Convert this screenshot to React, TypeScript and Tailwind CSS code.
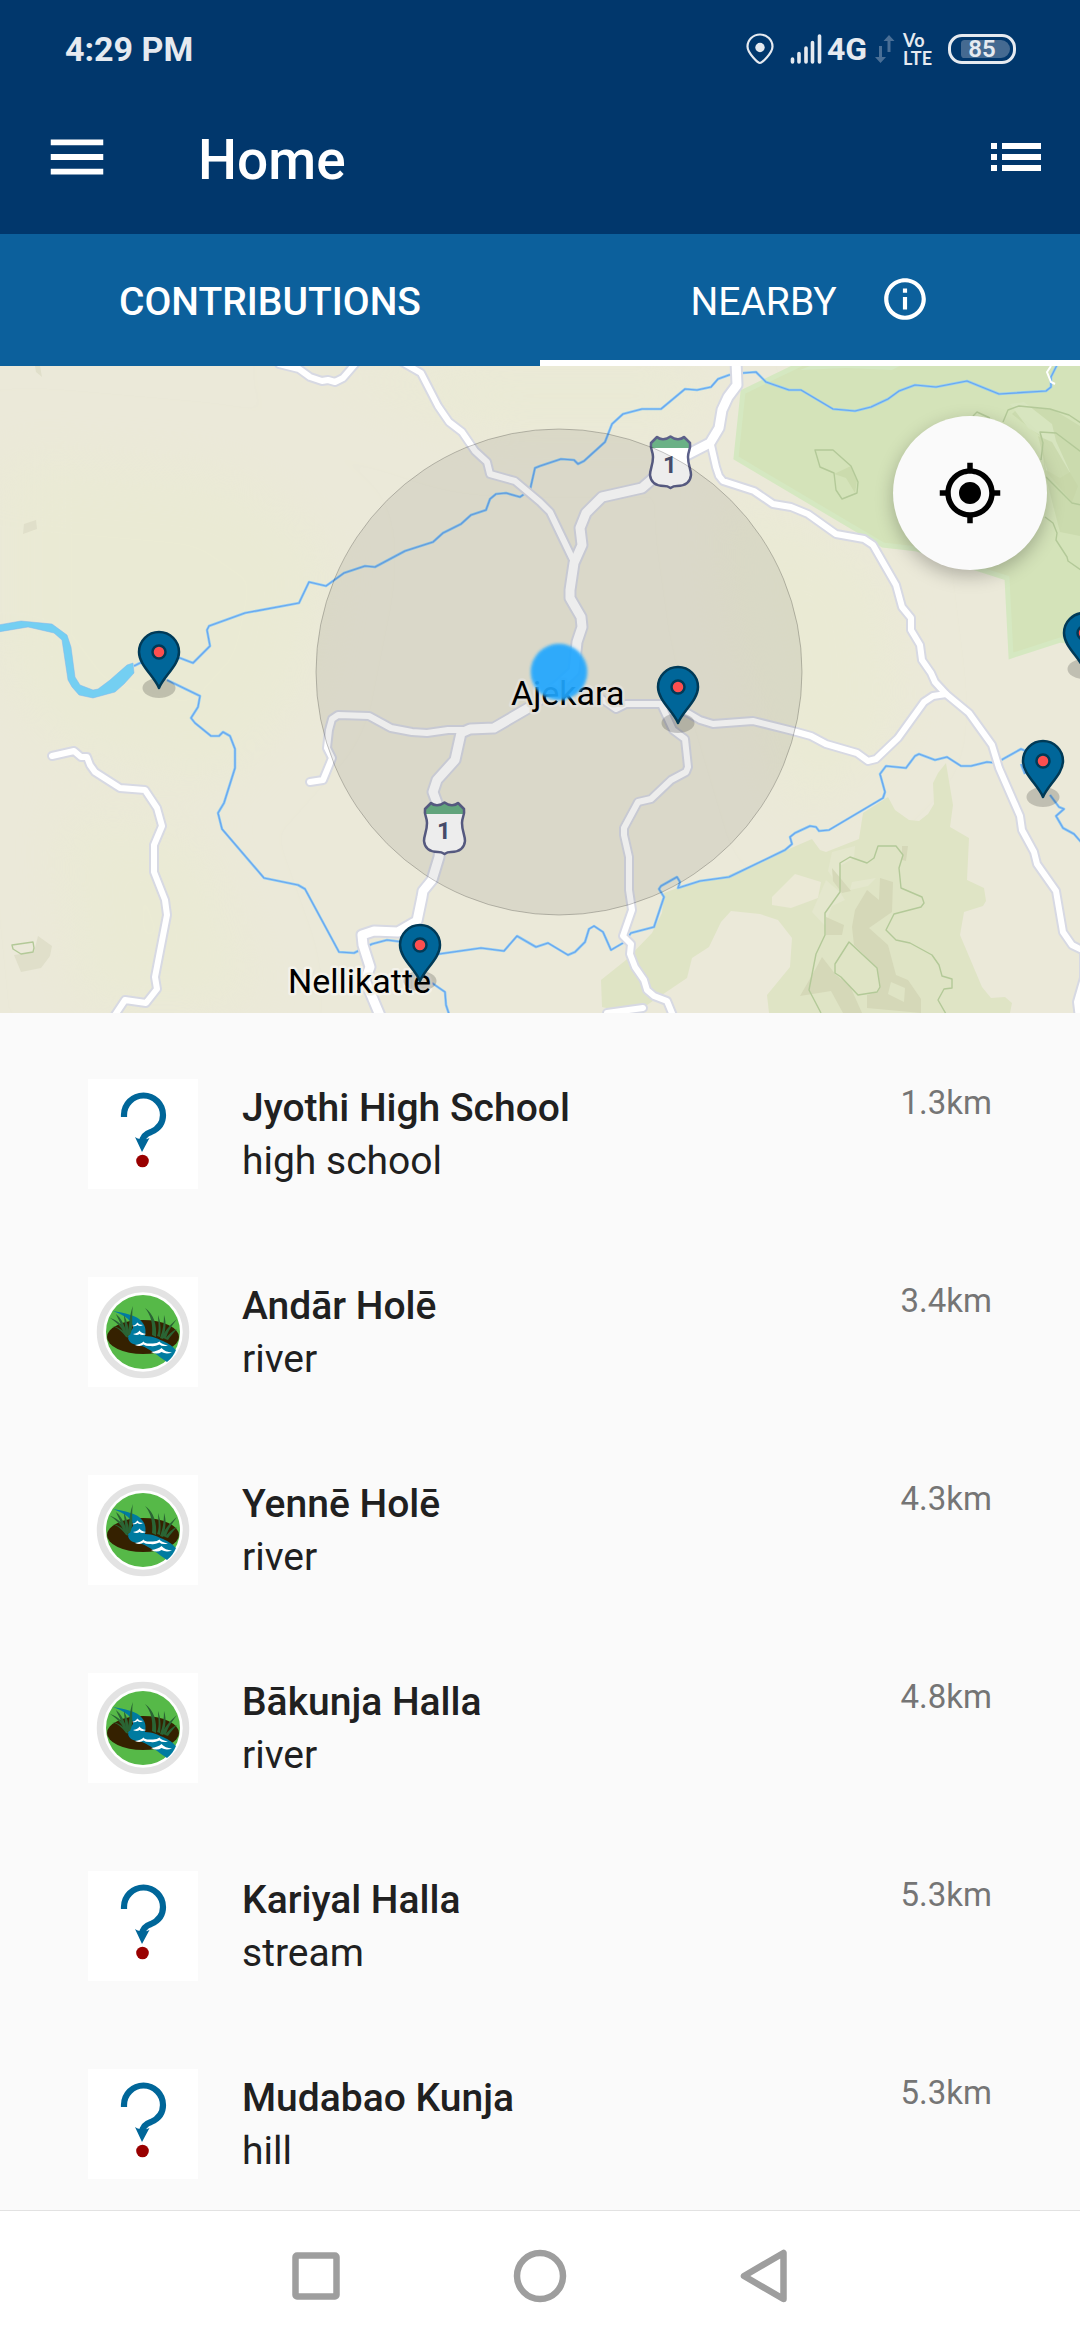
import React from "react";
import { MdInfoOutline, MdMenu, MdMyLocation } from "react-icons/md";

type Kind = "unknown" | "river";

interface Place {
  name: string;
  type: string;
  distance: string;
  kind: Kind;
}

const places: Place[] = [
  { name: "Jyothi High School", type: "high school", distance: "1.3km", kind: "unknown" },
  { name: "Andār Holē", type: "river", distance: "3.4km", kind: "river" },
  { name: "Yennē Holē", type: "river", distance: "4.3km", kind: "river" },
  { name: "Bākunja Halla", type: "river", distance: "4.8km", kind: "river" },
  { name: "Kariyal Halla", type: "stream", distance: "5.3km", kind: "unknown" },
  { name: "Mudabao Kunja", type: "hill", distance: "5.3km", kind: "unknown" },
];

const minorRoads = [
  "M279 -2 L299 3 L310 11 L322 15 L328 14 L335 16 L343 12 L356 -3",
  "M402 -4 L421 7 L438 40 L449 56 L462 66 L475 85 L487 96 L490 108 L515 115 L540 136 L550 146 L574 196",
  "M596 329 L616 343 L626 338 L661 338 L688 347 L700 354 L713 358 L753 355 L793 365 L811 370 L826 378 L857 387 L868 395 L876 393 L898 372 L924 336 L933 330 L946 328",
  "M661 338 L673 364 L685 373 L688 401 L686 406 L671 414 L651 433 L638 436 L624 462 L624 469 L629 491 L629 524 L632 544 L623 570 L631 578 L630 588 L635 601 L644 614 L647 624 L654 630 L667 635 L674 652",
  "M607 647 L643 642",
  "M711 79 L716 101 L719 110 L723 115 L754 125 L773 138 L791 141 L808 148 L836 168 L864 173 L873 179 L896 219 L902 241 L911 252 L911 264 L920 279 L922 294 L931 307 L935 316 L946 328 L969 347 L992 379 L999 402 L1020 450 L1022 464 L1034 486 L1037 498 L1056 525 L1063 566 L1072 579 L1084 585 L1084 612 L1077 636 L1079 652",
  "M52 390 L74 385 L81 391 L87 391 L90 399 L95 406 L120 422 L145 424 L157 442 L162 460 L154 479 L154 506 L165 534 L167 549 L155 611 L157 623 L146 637 L125 634 L113 652",
  "M310 416 L323 414 L332 392 L327 382 L329 364 L332 353 L338 349 L369 350 L391 362 L412 366 L427 367 L448 364 L470 364",
];

const highways = [
  "M736 -5 L737 19 L728 31 L722 44 L719 62 L710 77 L671 97 L642 122 L602 131 L586 147 L580 162 L582 179 L574 197 L570 224 L570 232 L581 251 L582 261 L577 276 L574 305 L560 318 L530 341 L494 362 L470 363 L461 367 L455 394 L437 414 L433 426 L437 437 L442 464 L439 491 L432 514 L423 525 L422 531 L417 555 L398 566 L374 565 L362 569 L363 579 L370 601 L365 614 L381 652",
];

const streams = [
  "M134 300 L140 297 L180 292 L193 297 L210 280 L207 264 L209 260 L245 247 L299 237 L309 216 L326 220 L344 207 L365 200 L375 201 L405 185 L433 176 L443 167 L461 158 L471 149 L486 144 L490 133 L496 128 L506 127 L520 131 L530 124 L535 102 L540 100 L561 93 L574 94 L578 98 L584 95 L605 76 L612 58 L623 48 L642 43 L661 43 L685 23 L697 24 L711 21 L718 13 L729 9 L743 7 L756 6 L766 16 L789 24 L801 24 L833 43 L855 45 L871 41 L888 33 L899 25 L915 19 L936 21 L967 15 L999 28 L1046 25 L1051 21 L1051 11 L1057 -1",
  "M167 314 L200 330 L198 341 L191 352 L195 357 L211 370 L219 370 L223 366 L230 370 L235 383 L235 402 L224 437 L218 447 L222 463 L264 512 L298 519 L305 523 L339 586 L354 587 L372 578 L387 574 L403 576 L420 590 L439 588 L481 582 L504 585 L517 570 L536 581 L548 577 L568 589 L575 586 L585 576 L589 563 L594 560 L603 566 L611 584 L623 577 L631 567 L654 561 L664 531 L659 523 L661 520 L677 511 L680 516 L678 522 L700 515 L729 511 L785 484 L792 478 L790 471 L795 467 L810 460 L816 461 L819 465 L829 464 L883 432 L885 426 L880 408 L886 400 L906 402 L915 390 L919 388 L935 394 L947 391 L961 400 L971 400 L987 396 L996 397 L1021 383 L1028 386",
  "M1021 398 L1025 408",
  "M1050 429 L1059 441 L1064 443 L1056 450 L1063 462 L1074 468 L1081 476",
  "M432 617 L445 626 L446 639 L449 648",
];

const contours = [
  "M815 84 L833 84 L851 100 L858 116 L857 127 L842 133 L836 124 L834 107 L820 101 Z",
  "M973 50 L977 46 L990 52 M1003 56 L1008 44 L1019 40 L1050 43 L1069 49 L1081 57",
  "M1081 86 L1056 67 L1040 66 L1043 77 L1041 94",
  "M1046 111 L1072 137 L1081 139",
  "M1045 151 L1053 157 L1057 167 L1056 174 L1067 191 L1068 195 L1081 204",
  "M821 647 L809 624 L816 588 L825 569 L825 547 L840 526 L840 497 L850 491 L867 497 L874 492 L878 480 L896 480 L903 489 L899 502 L901 522 L922 531 L924 537 L921 541 L894 548 L886 564 L896 574 L910 577 L932 589 L939 599 L942 610 L952 613 L952 622 L944 623 L938 634 L946 648",
  "M849 576 L877 602 L880 621 L877 626 L858 629 L841 611 L835 607 L835 598 Z",
  "M12 579 L33 576 L34 582 L33 586 L21 588 L13 583 Z",
];

const pins = [
  { x: 159, y: 323 },
  { x: 678, y: 358 },
  { x: 1043, y: 432 },
  { x: 420, y: 616 },
  { x: 1084, y: 304 },
];

function RoadShield({ x, y }: { x: number; y: number }) {
  const outline =
    "M8 2 C11 5 17 5 21.500 1.500 C26 5 32 5 35 2 L41 8 C42 14 39 16 39 22 C39 30 42 34 42 40 C41 50 33 51 28 51 C24 51 23 52 21.500 53 C20 52 19 51 15 51 C10 51 2 50 1 40 C1 34 4 30 4 22 C4 16 1 14 2 8 Z";
  return (
    <g transform={`translate(${x} ${y})`}>
      <path d={outline} fill="#fff" />
      <path d="M8 2 C11 5 17 5 21.500 1.500 C26 5 32 5 35 2 L41 8 L40 13 L3 13 L2 8 Z" fill="#6ab186" />
      <path d={outline} fill="none" stroke="#5c6089" strokeWidth="2.500" strokeLinejoin="round" />
      <text x="21" y="38" textAnchor="middle" fontSize="24" fontWeight="700" fill="#4c5172">
        1
      </text>
    </g>
  );
}

function Pin({ x, y }: { x: number; y: number }) {
  return (
    <g transform={`translate(${x} ${y})`}>
      <ellipse cx="0" cy="-1" rx="16.500" ry="10" fill="#000" opacity="0.18" />
      <path
        d="M0 -1 C-5 -13 -20 -24 -20 -37 A20 20 0 0 1 20 -37 C20 -24 5 -13 0 -1 Z"
        fill="#069"
        stroke="#003a57"
        strokeWidth="2.500"
        strokeLinejoin="round"
      />
      <circle cx="0" cy="-37" r="6.500" fill="#fe4f4f" stroke="#003a57" strokeWidth="2.500" />
    </g>
  );
}

function MapDrawing() {
  return (
    <svg
      className="block h-[647px] w-full"
      viewBox="0 0 1080 647"
      preserveAspectRatio="xMidYMid slice"
      role="img"
      aria-label="Map around Ajekara"
    >
      <defs>
        <filter id="soft" x="-20%" y="-20%" width="140%" height="140%">
          <feGaussianBlur stdDeviation="1.500" />
        </filter>
        <filter id="haze" x="-20%" y="-20%" width="140%" height="140%">
          <feGaussianBlur stdDeviation="30" />
        </filter>
      </defs>
      <rect width="1080" height="647" fill="#ebe9d9" />
      <g filter="url(#haze)" fill="#eaead4">
        <path d="M0 90 L230 110 L330 180 L300 330 L220 420 L60 380 L0 300 Z" />
        <path d="M300 0 L700 0 L720 60 L480 60 Z" />
        <path d="M720 120 L880 200 L900 360 L800 460 L740 260 Z" />
        <path d="M60 440 L200 470 L260 640 L80 640 Z" />
      </g>

      <path
        d="M805 -4 L743 26 L736 92 L883 179 L917 183 L1007 212 L1011 290 L1060 274 L1090 279 L1090 -4 Z"
        fill="#d4e3b9"
        stroke="#d5e8c1"
        strokeWidth="5"
      />
      <path d="M800 4 L810 0 L900 0 L892 4 L846 2 Z" fill="#d5e8c4" />
      <path d="M1012 48 L1020 40 L1054 44 L1080 60 L1080 170 L1060 166 L1046 112 L1040 70 Z" fill="#cbdbae" />
      <path d="M1010 38 L1024 36 L1052 58 L1056 75 L1070 106 L1060 112 L1046 104 L1042 70 L1028 62 Z" fill="#d7e5bf" />
      <path d="M1038 70 L1052 76 L1066 100 L1078 120 L1072 136 L1048 108 Z" fill="#c6d6a6" opacity="0.7" />
      <path d="M834 108 L851 100 L857 115 L855 127 L846 112 Z" fill="#cbdbad" />

      <path
        d="M601 614 L626 594 L652 567 L662 547 L664 527 L680 521 L729 509 L812 473 L820 484 L826 486 L859 473 L863 447 L888 431 L895 444 L909 454 L919 455 L928 448 L934 438 L933 417 L938 407 L946 397 L953 439 L950 461 L969 472 L967 514 L984 522 L986 535 L983 540 L964 546 L960 569 L982 621 L991 632 L1005 631 L1012 637 L1010 647 L769 647 L767 629 L790 601 L792 572 L778 554 L760 548 L731 545 L721 556 L709 581 L692 592 L687 612 L647 639 L620 645 L602 641 Z"
        fill="#dfe4c5"
      />
      <path d="M772 531 L795 508 L821 516 L818 532 L791 542 L772 539 Z" fill="#ebe9d6" />
      <g fill="#e4e7cd">
        <path d="M832 486 L855 480 L854 492 L840 500 L838 520 L828 505 Z" />
        <path d="M812 546 L826 514 L840 526 L845 534 L832 540 L825 560 Z" />
        <path d="M852 516 L876 512 L868 520 L850 524 Z" />
      </g>
      <g fill="#d5d8b8">
        <path d="M867 524 L879 534 L880 512 L893 516 L892 546 L869 562 L888 579 L896 609 L908 614 L921 633 L921 647 L867 642 L867 629 L877 626 L880 621 L877 602 L854 579 L852 561 L855 544 Z" />
        <path d="M822 591 L836 609 L850 620 L862 647 L843 647 L831 625 L800 630 L815 604 Z" />
        <path d="M826 551 L844 559 L842 569 L826 569 Z" />
        <path d="M832 502 L851 525 L842 527 L833 515 Z" />
        <path d="M902 480 L908 480 L906 495 L902 494 Z" />
      </g>
      <path d="M891 616 L905 622 L904 636 L888 628 Z" fill="#dfe4c5" />

      <g fill="#e0dfca">
        <path d="M36 154 L24 158 L23 168 L37 163 Z" />
        <path d="M35 0 L40 0 L42 11 L36 6 Z" />
        <path d="M14 589 L34 586 L38 570 L52 580 L50 590 L41 602 L21 606 Z" />
      </g>
      <g fill="none" stroke="#b3c998" strokeWidth="1.400" strokeLinejoin="round">
        {contours.map((d) => (
          <path key={d} d={d} />
        ))}
      </g>

      <path
        d="M-2 259 L21 255 L52 258 L67 269 L71 281 L75 311 L80 319 L93 324 L98 323 L110 314 L127 299 L133 297 L134 307 L124 318 L115 326 L93 332 L79 329 L72 321 L68 314 L62 274 L54 267 L28 261 L-2 266 Z"
        fill="#74cff2"
        stroke="#7fb4ee"
        strokeWidth="0.500"
      />
      <g fill="none" strokeLinejoin="round">
        {streams.map((d) => (
          <g key={d}>
            <path d={d} stroke="#8fcdf5" strokeWidth="2.600" />
            <path d={d} stroke="#6ba6ee" strokeWidth="1.200" />
          </g>
        ))}
      </g>

      <g fill="none" strokeLinecap="round" strokeLinejoin="round" stroke="#d7d9e3">
        {minorRoads.map((d) => (
          <path key={d} d={d} strokeWidth="10" />
        ))}
        {highways.map((d) => (
          <path key={d} d={d} strokeWidth="13" />
        ))}
      </g>
      <g fill="none" strokeLinecap="round" strokeLinejoin="round" stroke="#fff">
        {minorRoads.map((d) => (
          <path key={d} d={d} strokeWidth="6" />
        ))}
        {highways.map((d) => (
          <path key={d} d={d} strokeWidth="9" />
        ))}
      </g>
      <path d="M1051 0 L1047 6 L1051 16 L1055 18" fill="none" stroke="#fff" strokeWidth="2" />

      <RoadShield x={649} y={69} />
      <RoadShield x={423} y={435} />

      <g
        fontSize="34"
        fill="#000"
        stroke="#f4f2ea"
        strokeWidth="5"
        strokeLinejoin="round"
        style={{ paintOrder: "stroke" }}
      >
        <text x="511" y="339">
          Ajekara
        </text>
        <text x="288" y="627">
          Nellikatte
        </text>
      </g>

      <circle cx="559" cy="306" r="243" fill="#000" fillOpacity="0.07" stroke="#000" strokeOpacity="0.22" />
      <circle cx="559" cy="306" r="28" fill="#4fc0fb" filter="url(#soft)" opacity="0.5" />
      <circle cx="559" cy="306" r="28" fill="#1fa4ff" filter="url(#soft)" opacity="0.84" />

      {pins.map((pin) => (
        <Pin key={`${pin.x}-${pin.y}`} x={pin.x} y={pin.y} />
      ))}
    </svg>
  );
}

function UnknownIcon() {
  return (
    <svg viewBox="0 0 110 110" className="size-[110px] shrink-0 bg-white" aria-hidden="true">
      <path
        d="M36 38 V36 A19.500 19.500 0 0 1 75 36 C75 45 70 50 63 53 C57 55 54 58 54 64"
        fill="none"
        stroke="#069"
        strokeWidth="6.200"
      />
      <path d="M47 58 C50 60 52 60 54 60 C57 61 59 60 61.500 59 L54 73 Z" fill="#069" />
      <circle cx="54.500" cy="82" r="6.300" fill="#900" />
    </svg>
  );
}

function RiverIcon() {
  return (
    <svg viewBox="0 0 110 110" className="size-[110px] shrink-0 bg-white" aria-hidden="true">
      <circle cx="55" cy="55" r="43" fill="none" stroke="#e3e3e3" strokeWidth="6.500" />
      <circle cx="55" cy="55" r="37" fill="#56b948" />
      <ellipse cx="55" cy="60" rx="36" ry="17" fill="#352100" />
      <path
        d="M25 34 C36 36 49 38 54 45 C58 50 58 54 57 59 C65 59 70 62 75 64 C82 67 85 70 88 73 C86 78 83 82 79 85 C70 79 62 72 54 69 C46 68 40 66 40 60 C40 54 46 53 45 49 C42 41 33 37 25 34 Z"
        fill="#007ba0"
      />
      <g fill="#2a6434">
        <path d="M37 58 C34 50 28 45 22 41 C30 43 37 50 40 59 Z" />
        <path d="M38 60 C33 53 28 50 24 49 C31 50 37 54 41 61 Z" />
        <path d="M35 55 C34 48 30 42 28 37 C33 41 37 48 39 58 Z" />
        <path d="M39 58 C42 48 41 38 45 29 C43 40 46 50 42 58 Z" />
        <path d="M37 57 C38 50 36 44 36 38 C39 44 41 51 41 59 Z" />
        <path d="M64 58 C65 47 63 38 57 31 C66 37 69 48 68 60 Z" />
        <path d="M69 59 C72 52 70 45 70 38 C73 46 73 53 72 60 Z" />
        <path d="M72 61 C75 53 76 46 76 38 C79 47 77 55 75 62 Z" />
        <path d="M74 61 C77 53 83 47 89 42 C84 49 79 55 78 62 Z" />
        <path d="M77 62 C80 58 84 54 89 52 C85 56 82 60 80 63 Z" />
      </g>
      <g fill="#fff">
        <path d="M44 49 Q48 48 49.500 45.500 Q51 48 55 48 Q52 50 49.500 48 Q47 50 44 49 Z" />
        <path d="M45 57 Q50 56 51.500 53.500 Q53 56 58 57 Q54 59 51.500 57 Q49 59 45 57 Z" />
        <path d="M47 68 Q53 67 55.500 64.500 Q57 67 63 66.500 Q69 67 71.500 64.500 Q73 67 80 68.500 Q74 70 71.500 67.500 Q66 70 63 69 Q58 69.500 55.500 67.500 Q52 70 47 68 Z" />
        <path d="M63 75 Q70 74 73.500 71 Q77 75 84 75.500 Q78 77.500 73.500 75 Q69 78 63 75 Z" />
      </g>
    </svg>
  );
}

function StatusBar() {
  return (
    <div className="flex h-20 items-center justify-between pt-[18px] pr-[64px] pl-[65px] text-[#e6eaf0]">
      <span className="text-[34px] leading-10 font-bold">4:29 PM</span>
      <div className="flex items-center">
        <svg viewBox="0 0 28 32" className="mr-4 h-8 w-7" fill="none" aria-label="Location on">
          <path
            d="M14 30 C12 30 1.500 20 1.500 13.500 A12.500 12 0 0 1 26.500 13.500 C26.500 20 16 30 14 30 Z"
            stroke="currentColor"
            strokeWidth="2.200"
          />
          <circle cx="14" cy="14.500" r="4.700" fill="currentColor" />
        </svg>
        <svg viewBox="0 0 32 30" className="mr-[5px] h-[30px] w-8" aria-label="Signal strength">
          <g stroke="currentColor" strokeWidth="3.600" strokeLinecap="round">
            <path d="M2.500 25 V28 M9 19.500 V28 M16 14 V28 M22.500 8.500 V28 M29.500 2 V28" />
          </g>
        </svg>
        <span className="mr-2 text-[32px] leading-8 font-bold">4G</span>
        <svg viewBox="0 0 20 28" className="mr-2 h-7 w-5 text-[#4a6f96]" fill="currentColor" aria-hidden="true">
          <path d="M4 11 H7 V22 H11 L5.500 28 L0 22 H4 Z" />
          <path d="M12.500 17 H15.500 V6 H19.500 L14 0 L8.500 6 H12.500 Z" />
        </svg>
        <span className="mr-4 flex flex-col font-['Lato',sans-serif] text-lg leading-[18px] font-bold">
          <span>Vo</span>
          <span>LTE</span>
        </span>
        <span className="relative flex h-[30px] w-[68px] items-center justify-center rounded-[14px] border-3 border-current">
          <span className="absolute inset-y-[3px] right-[3px] left-[10px] rounded-l-sm rounded-r-[10px] bg-[#456a91]" />
          <span className="relative text-2xl leading-6 font-semibold">85</span>
        </span>
      </div>
    </div>
  );
}

export default function App() {
  return (
    <div className="flex min-h-screen flex-col bg-[#fafafa] font-['Roboto',sans-serif] text-[#202020]">
      <header className="bg-[#01376c] text-white">
        <StatusBar />
        <div className="flex h-[154px] items-center pr-[38px] pl-[42px]">
          <button type="button" aria-label="Open menu">
            <MdMenu className="size-[70px]" />
          </button>
          <h1 className="ml-[86px] flex-1 pt-1.5 text-[55px] leading-[64px] font-medium">Home</h1>
          <button type="button" aria-label="Show list">
            <svg viewBox="0 0 52 28" className="h-7 w-[52px]" fill="currentColor" aria-hidden="true">
              <path d="M1 0h6v6H1zM12 0h39v6H12zM1 11h6v6H1zM12 11h39v6H12zM1 22h6v6H1zM12 22h39v6H12z" />
            </svg>
          </button>
        </div>
      </header>

      <nav className="grid h-[132px] grid-cols-2 bg-[#0c609c] text-[39px] leading-[46px] text-white" role="tablist">
        <button type="button" role="tab" aria-selected="false" className="border-b-6 border-transparent pt-2.5 font-medium">
          CONTRIBUTIONS
        </button>
        <button
          type="button"
          role="tab"
          aria-selected="true"
          className="flex items-center justify-center gap-[43px] border-b-6 border-white"
        >
          <span className="pt-2.5">NEARBY</span>
          <MdInfoOutline className="mt-1 size-[50px]" />
        </button>
      </nav>

      <section className="relative overflow-hidden">
        <MapDrawing />
        <button
          type="button"
          aria-label="Center on my location"
          className="absolute top-[50px] right-[33px] flex size-[154px] items-center justify-center rounded-full bg-[#fafafa] text-black shadow-[0_6px_18px_rgba(0,0,0,0.25)]"
        >
          <MdMyLocation className="size-[66px]" />
        </button>
      </section>

      <main className="px-[88px] pt-[66px]">
        <ul className="flex flex-col gap-[88px]">
          {places.map((place) => (
            <li key={place.name}>
              <button type="button" className="flex w-full items-start text-left">
                {place.kind === "river" ? <RiverIcon /> : <UnknownIcon />}
                <span className="ml-11 flex flex-1 flex-col pt-[3px] text-[39px] leading-[53px]">
                  <span className="font-medium">{place.name}</span>
                  <span>{place.type}</span>
                </span>
                <span className="text-[33px] leading-[48px] text-[#757575]">{place.distance}</span>
              </button>
            </li>
          ))}
        </ul>
      </main>

      <footer className="mt-auto flex h-[130px] items-center justify-center gap-[168px] border-t border-[#e2e2e2] bg-white text-[#9e9e9e]">
        <button type="button" aria-label="Recent apps">
          <svg viewBox="0 0 56 56" className="size-14" fill="none" stroke="currentColor" strokeWidth="6.500">
            <rect x="7.500" y="7.500" width="41" height="41" rx="1.500" />
          </svg>
        </button>
        <button type="button" aria-label="Home screen">
          <svg viewBox="0 0 56 56" className="size-14" fill="none" stroke="currentColor" strokeWidth="6.500">
            <circle cx="28" cy="28" r="23" />
          </svg>
        </button>
        <button type="button" aria-label="Back">
          <svg
            viewBox="0 0 56 56"
            className="size-14"
            fill="none"
            stroke="currentColor"
            strokeWidth="6.500"
            strokeLinejoin="round"
          >
            <path d="M47.500 5 V51 L8 28 Z" />
          </svg>
        </button>
      </footer>
    </div>
  );
}
